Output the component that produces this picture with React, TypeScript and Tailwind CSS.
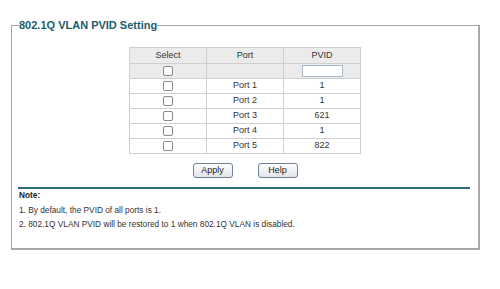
import React from 'react';

const ports = [
    { name: 'Port 1', pvid: '1' },
    { name: 'Port 2', pvid: '1' },
    { name: 'Port 3', pvid: '621' },
    { name: 'Port 4', pvid: '1' },
    { name: 'Port 5', pvid: '822' },
];

function Box() {
    return <div className="mx-auto w-[10px] h-[10px] rounded-[2px] border border-[#8a8a8a] bg-white" />;
}

function Btn({ label }: { label: string }) {
    return (
        <button className="w-[40px] h-[15px] rounded-[3px] border border-[#6f8192] bg-gradient-to-b from-white to-[#e2e4ea] text-[9px] leading-none text-[#222]">
            {label}
        </button>
    );
}

export default function App() {
    const cell = 'border border-[#cfcfcf] text-center align-middle p-0';
    return (
        <div className="w-[500px] h-[289px] bg-white pt-[19px] pl-[11px]" style={{ fontFamily: '"Liberation Sans", Arial, sans-serif' }}>
            <fieldset className="w-[469px] h-[231px] border border-[#a7a7a7] border-r-2 border-b-2 p-0 m-0">
                <legend className="ml-[7px] px-0 text-[11px] font-bold leading-[13px] text-[#1c5d6b]">802.1Q VLAN PVID Setting</legend>

                <table className="mx-auto mt-[15px] w-[232px] border-collapse text-[9px] text-[#333] table-fixed">
                    <tbody>
                        <tr className="h-[16px] bg-[#ebebeb]">
                            <td className={cell}>Select</td>
                            <td className={cell}>Port</td>
                            <td className={cell}>PVID</td>
                        </tr>
                        <tr className="h-[15px] bg-[#ebebeb]">
                            <td className={cell}><Box /></td>
                            <td className={cell}></td>
                            <td className={cell}>
                                <div className="mx-auto w-[41px] h-[12px] border border-[#a9b9c7] bg-white" />
                            </td>
                        </tr>
                        {ports.map((p) => (
                            <tr key={p.name} className="h-[15px] bg-white">
                                <td className={cell}><Box /></td>
                                <td className={cell}>{p.name}</td>
                                <td className={cell}>{p.pvid}</td>
                            </tr>
                        ))}
                    </tbody>
                </table>

                <div className="flex justify-center gap-[25px] mt-[9px]">
                    <Btn label="Apply" />
                    <Btn label="Help" />
                </div>

                <div className="mx-[6px] mr-[8px] mt-[9px] h-[2px] bg-[#2f6f79]" />

                <div className="pl-[7px] text-[8.3px] text-[#333] leading-[14.5px] -mt-[1px]">
                    <div className="font-bold text-[#222]">Note:</div>
                    <div>1. By default, the PVID of all ports is 1.</div>
                    <div>2. 802.1Q VLAN PVID will be restored to 1 when 802.1Q VLAN is disabled.</div>
                </div>
            </fieldset>
        </div>
    );
}
